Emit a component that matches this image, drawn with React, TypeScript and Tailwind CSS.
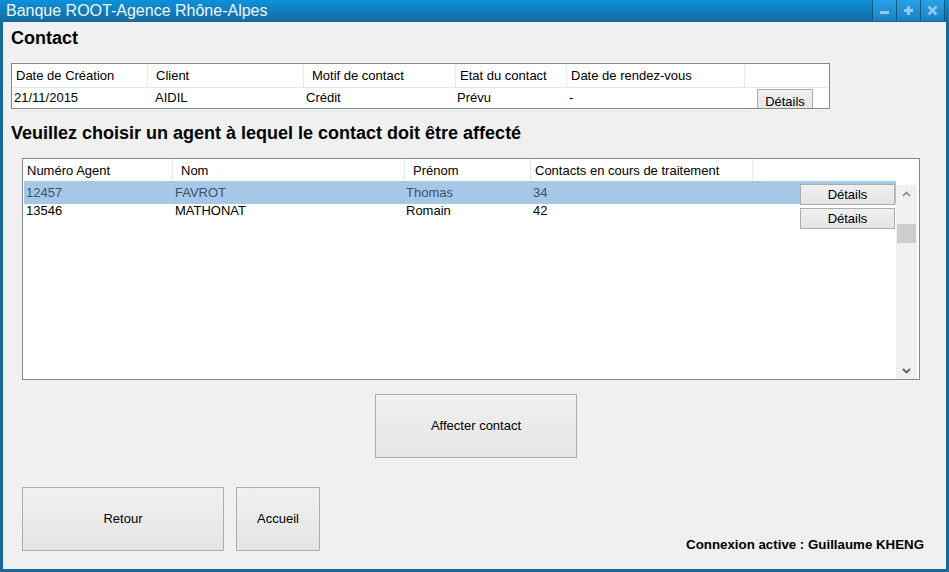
import React from "react";

const Btn = ({ children, className = "" }: { children: React.ReactNode; className?: string }) => (
  <div
    className={
      "flex items-center justify-center border border-[#adadad] bg-gradient-to-b from-[#f0f0f0] to-[#e5e5e5] text-[13px] leading-[15px] text-black " +
      className
    }
  >
    {children}
  </div>
);

const TitleBtn = ({ children }: { children: React.ReactNode }) => (
  <div className="w-[24px] h-[21px] border-l border-[#0e5a87] bg-gradient-to-b from-[#2aa1e6] to-[#1c80c2] flex items-center justify-center">
    {children}
  </div>
);

export default function App() {
  return (
    <div className="w-[949px] h-[572px] bg-[#17699a] flex flex-col font-['Liberation_Sans',Arial,sans-serif] overflow-hidden">
      {/* Title bar */}
      <div className="h-[22px] flex items-start bg-gradient-to-b from-[#0b91dc] to-[#146a9c]">
        <span className="pl-[6px] text-[16px] leading-[21px] text-[#eef7fd]">Banque ROOT-Agence Rhône-Alpes</span>
        <div className="ml-auto mr-[4px] flex border-r border-[#0e5a87]">
          <TitleBtn>
            <svg width="11" height="11" viewBox="0 0 11 11">
              <rect x="1" y="6" width="9" height="3" fill="#8fcbef" />
            </svg>
          </TitleBtn>
          <TitleBtn>
            <svg width="11" height="11" viewBox="0 0 11 11">
              <rect x="1" y="4" width="9" height="3" fill="#8fcbef" />
              <rect x="4" y="1" width="3" height="9" fill="#8fcbef" />
            </svg>
          </TitleBtn>
          <TitleBtn>
            <svg width="11" height="11" viewBox="0 0 11 11">
              <path d="M1.5 1.5 L9.5 9.5 M9.5 1.5 L1.5 9.5" stroke="#8fcbef" strokeWidth="2.6" />
            </svg>
          </TitleBtn>
        </div>
      </div>

      {/* Content */}
      <div className="flex-1 mx-[3px] mb-[3px] bg-[#f0f0f0] flex flex-col text-black">
        <div className="pt-[6px] pl-[8px] text-[18px] leading-[21px] font-bold">Contact</div>

        {/* Table 1 */}
        <div className="mt-[14px] ml-[8px] w-[819px] h-[46px] border border-[#828790] bg-white flex flex-col text-[13px] leading-[15px]">
          <div className="h-[24px] flex border-b border-[#e3eaf3]">
            <div className="w-[136px] border-r border-[#e3eaf3] pl-[4px] flex items-center">Date de Création</div>
            <div className="w-[156px] border-r border-[#e3eaf3] pl-[8px] flex items-center">Client</div>
            <div className="w-[152px] border-r border-[#e3eaf3] pl-[8px] flex items-center">Motif de contact</div>
            <div className="w-[111px] border-r border-[#e3eaf3] pl-[4px] flex items-center">Etat du contact</div>
            <div className="w-[178px] border-r border-[#e3eaf3] pl-[4px] flex items-center">Date de rendez-vous</div>
            <div className="flex-1" />
          </div>
          <div className="h-[20px] flex overflow-hidden">
            <div className="w-[136px] pl-[2px] pb-[1px] flex items-center">21/11/2015</div>
            <div className="w-[156px] pl-[7px] pb-[1px] flex items-center">AIDIL</div>
            <div className="w-[152px] pl-[2px] pb-[1px] flex items-center">Crédit</div>
            <div className="w-[111px] pl-[1px] pb-[1px] flex items-center">Prévu</div>
            <div className="w-[178px] pl-[2px] pb-[1px] flex items-center">-</div>
            <div className="flex-1 pl-[12px]">
              <Btn className="mt-[1px] w-[56px] h-[24px]">Détails</Btn>
            </div>
          </div>
        </div>

        <div className="mt-[14px] pl-[8px] text-[18px] leading-[21px] font-bold">
          Veuillez choisir un agent à lequel le contact doit être affecté
        </div>

        {/* Table 2 */}
        <div className="relative mt-[14px] ml-[19px] w-[898px] h-[222px] border border-[#828790] bg-white flex flex-col text-[13px] leading-[15px]">
          <div className="h-[22px] flex">
            <div className="w-[150px] border-r border-[#e3eaf3] pl-[4px] flex items-center">Numéro Agent</div>
            <div className="w-[232px] border-r border-[#e3eaf3] pl-[8px] flex items-center">Nom</div>
            <div className="w-[126px] border-r border-[#e3eaf3] pl-[8px] flex items-center">Prénom</div>
            <div className="w-[222px] border-r border-[#e3eaf3] pl-[4px] flex items-center">Contacts en cours de traitement</div>
            <div className="flex-1" />
          </div>
          <div className="flex-1 flex">
            <div className="w-[873px] pl-[1px] flex flex-col">
              <div className="h-[23px] bg-[#a6c8e7] text-[#3e4f6f] flex items-center">
                <div className="w-[149px] pl-[2px]">12457</div>
                <div className="w-[231px] pl-[2px]">FAVROT</div>
                <div className="w-[127px] pl-[2px]">Thomas</div>
                <div className="flex-1 pl-[2px]">34</div>
              </div>
              <div className="h-[19px] mt-[-1px] flex items-start">
                <div className="w-[149px] pl-[2px]">13546</div>
                <div className="w-[231px] pl-[2px]">MATHONAT</div>
                <div className="w-[127px] pl-[2px]">Romain</div>
                <div className="flex-1 pl-[2px]">42</div>
              </div>
            </div>
            <div className="w-[21px] pt-[4px] flex flex-col">
              <div className="flex-1 bg-[#f0f0f0] flex flex-col">
                <div className="h-[17px] flex items-center justify-center">
                  <svg width="9" height="6" viewBox="0 0 9 6">
                    <path d="M1 5 L4.5 1.5 L8 5" stroke="#8a8a8a" strokeWidth="1.6" fill="none" />
                  </svg>
                </div>
                <div className="mt-[22px] mx-[1px] h-[19px] bg-[#cdcdcd]" />
                <div className="flex-1" />
                <div className="h-[17px] flex items-center justify-center">
                  <svg width="9" height="6" viewBox="0 0 9 6">
                    <path d="M1 1 L4.5 4.5 L8 1" stroke="#606060" strokeWidth="1.8" fill="none" />
                  </svg>
                </div>
              </div>
            </div>
            <div className="w-[2px]" />
          </div>
          <Btn className="absolute left-[777px] top-[25px] w-[95px] h-[21px]">Détails</Btn>
          <Btn className="absolute left-[777px] top-[49px] w-[95px] h-[21px]">Détails</Btn>
        </div>

        <Btn className="mt-[14px] ml-[372px] w-[202px] h-[64px] pb-[1px]">Affecter contact</Btn>

        <div className="mt-[29px] flex">
          <Btn className="ml-[19px] w-[202px] h-[64px] pb-[1px]">Retour</Btn>
          <Btn className="ml-[12px] w-[84px] h-[64px] pb-[1px]">Accueil</Btn>
          <div className="ml-auto mr-[22px] self-end mb-[-1px] text-[13.3px] leading-[15px] font-bold">
            Connexion active : Guillaume KHENG
          </div>
        </div>
      </div>
    </div>
  );
}
